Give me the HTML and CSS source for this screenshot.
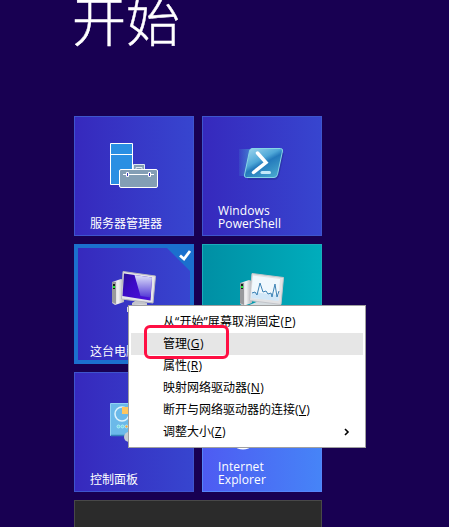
FILE: index.html
```html
<!DOCTYPE html>
<html lang="zh-CN">
<head>
<meta charset="utf-8">
<title>开始</title>
<link rel="stylesheet" href="styles.css">
</head>
<body>
<main class="screen">
  <h1 class="title">开始</h1>
  <section class="tiles">
    <div class="tile">
      <svg class="icon" viewBox="0 0 120 120">
        <path d="M36.500 27.500h22v41h-22z" fill="#2a8fe3" stroke="#fff"/>
        <path d="M36.500 38.500h22" stroke="#fff"/>
        <path d="M59.500 53v-4.500h11v4.500M62 53v-1.500h6v1.500" fill="#839eb5" stroke="#dfe9f5"/>
        <rect x="45.500" y="53.500" width="38" height="18" rx="1.500" fill="#839eb5" stroke="#fff"/>
        <path d="M49 58.500h31" stroke="#fff"/>
        <path d="M52.500 56.500h2v4h-2zM74.500 56.500h2v4h-2z" fill="#3536b8" stroke="#fff"/>
      </svg>
      <span class="label">服务器管理器</span>
    </div>
    <div class="tile">
      <svg class="icon" viewBox="0 0 120 120">
        <defs>
          <linearGradient id="ps" x1="0" y1="0" x2=".7" y2="1"><stop offset="0" stop-color="#a4daf0"/><stop offset=".45" stop-color="#4fa8d8"/><stop offset=".58" stop-color="#2379bb"/><stop offset="1" stop-color="#45a4cd"/></linearGradient>
          <linearGradient id="trail"><stop offset="0" stop-color="#479bd6" stop-opacity=".15"/><stop offset="1" stop-color="#479bd6" stop-opacity=".8"/></linearGradient>
        </defs>
        <path d="M37 33h14l-6 27h-8z" fill="url(#trail)"/>
        <path d="M46 63h26q3 0 4-3l5-23" fill="none" stroke="#25319a" stroke-width="2" opacity=".6"/>
        <path d="M50 32.500h28.500q2.500 0 2 2.500l-5 23.500q-.7 3-3.500 3H44.500q-2.500 0-2-2.500l5-24q.6-2.500 2.500-2.500z" fill="url(#ps)" stroke="#86d5e5"/>
        <path d="M55.500 37l8.500 9.500-12.500 10" fill="none" stroke="#fff" stroke-width="3.500" stroke-linecap="round"/>
        <path d="M60 56.500h7.500" stroke="#c3e9f9" stroke-width="3" stroke-linecap="round"/>
      </svg>
      <span class="label latin">Windows<br>PowerShell</span>
    </div>
    <div class="tile selected">
      <svg class="icon" viewBox="0 0 120 120">
        <defs>
          <linearGradient id="scr" x1="0" y1="0" x2="1" y2=".7"><stop offset="0" stop-color="#281094"/><stop offset=".4" stop-color="#3b0ac5"/><stop offset="1" stop-color="#4a12d8"/></linearGradient>
          <linearGradient id="shine" x1="0" y1="0" x2="0" y2="1"><stop offset="0" stop-color="#dfe2fa"/><stop offset="1" stop-color="#5238d6"/></linearGradient>
          <linearGradient id="metal"><stop offset="0" stop-color="#b8b8bd"/><stop offset=".5" stop-color="#f3f3f5"/><stop offset="1" stop-color="#aeb0b6"/></linearGradient>
        </defs>
        <path d="M38 38l9-3 3 1v22l-9 3-3-2z" fill="url(#metal)"/>
        <path d="M38 38h4v22l-4-2z" fill="#98999d"/>
        <path d="M39 40h2v5h-2z" fill="#171d19"/><path d="M39 42h2v2h-2z" fill="#25e83a"/>
        <path d="M64 55l9 4v4h-15v-4z" fill="#c4c5cb"/>
        <path d="M53 63q12-5 25-1l3 2-3 4H53z" fill="#dddde4"/>
        <path d="M49 27.500l32.500 4.500-2.500 27-31.500-4z" fill="#e6e6ea" stroke="#b7b7be"/>
        <path d="M50 29.500l28 4-1.500 23L48.500 52z" fill="url(#scr)"/>
        <path d="M60.500 31l17.500 2.500-1.500 20-10-1.500z" fill="url(#shine)"/>
      </svg>
      <svg class="badge" viewBox="0 0 31 31"><path d="M0 0h31v31z" fill="#1b70ce"/><path d="M17 11.500l4 3.500 6-8" fill="none" stroke="#fff" stroke-width="2.800"/></svg>
      <span class="label">这台电脑</span>
    </div>
    <div class="tile teal">
      <svg class="icon" viewBox="0 0 120 120">
        <path d="M38 39l9-3 3 1v22l-9 3-3-2z" fill="url(#metal)"/>
        <path d="M38 39h4v22l-4-2z" fill="#98999d"/>
        <path d="M39 40h2v5h-2z" fill="#171d19"/><path d="M39 42h2v2h-2z" fill="#25e83a"/>
        <path d="M57 57h17l6 5H45z" fill="#d5dce0"/>
        <path d="M50 29.500l31.500 4-2.500 27-31.500-4z" fill="#e2e2e4" stroke="#c3c5ca"/>
        <path d="M51 31.500l27 3.500-1.500 21.500L49 54z" fill="#f0f8fd"/>
        <path d="M50 48l27 3-.5 6L49 54z" fill="#d1e7f8"/>
        <path d="M50 49l3-1 2 3 3-12 3 9 3-1 2 3 3-1 1 4 3-13 2 13 2-6" fill="none" stroke="#3c82b5"/>
      </svg>
    </div>
    <div class="tile">
      <svg class="icon" viewBox="0 0 120 120">
        <path d="M36.500 31.500h38v32h-38z" fill="#6bb9e9" stroke="#92d2f4"/>
        <path d="M37 63.500h37" stroke="#3583bb" stroke-width="1.500"/>
        <circle cx="48" cy="42" r="7" fill="none" stroke="#ddf2fc" stroke-width="1.500"/>
        <path d="M48 42v-7h7v7z" fill="#ffc65e"/>
        <g fill="#71d6df" stroke="#c4fbff" stroke-width=".7"><circle cx="44.500" cy="54.500" r="1.500"/><circle cx="48.500" cy="54.500" r="1.500"/><circle cx="52.500" cy="54.500" r="1.500" fill="#f4a334"/></g>
        <circle cx="55" cy="65" r="5" fill="#c6ccd1"/>
      </svg>
      <span class="label">控制面板</span>
    </div>
    <div class="tile ie">
      <svg class="icon" viewBox="0 0 120 120"><circle cx="41" cy="63.500" r="14" fill="#fff"/></svg>
      <span class="label latin">Internet<br>Explorer</span>
    </div>
    <div class="tile wide"></div>
  </section>
  <ul class="menu">
    <li class="unpin">从“开始”屏幕取消固定(<u>P</u>)</li>
    <li class="active">管理(<u>G</u>)</li>
    <li>属性(<u>R</u>)</li>
    <li>映射网络驱动器(<u>N</u>)</li>
    <li>断开与网络驱动器的连接(<u>V</u>)</li>
    <li>调整大小(<u>Z</u>)<svg class="arrow" viewBox="0 0 6 8"><path d="M1 1l3 3-3 3" fill="none" stroke="#000" stroke-width="1.600"/></svg></li>
  </ul>
  <div class="marker"></div>
</main>
</body>
</html>
```
FILE: styles.css
```css
* { box-sizing: border-box; }
body { margin: 0; background: #180052; }
.screen {
  position: relative;
  height: 527px;
  padding-left: 74px;
  overflow: hidden;
  font: 12px/13px "Open Sans", "Noto Sans CJK SC", sans-serif;
}
.title {
  height: 116px;
  margin: 0 0 0 -2px;
  font: 300 54px/37px "Noto Sans CJK SC", sans-serif;
  -webkit-text-stroke: 0.4px #fff;
  color: #fff;
  white-space: nowrap;
}
.tiles {
  display: grid;
  grid-template-columns: 120px 120px;
  grid-auto-rows: 120px;
  gap: 8px;
}
.tile {
  position: relative;
  display: flex;
  align-items: flex-end;
  padding: 0 15px 5px;
  border: 1px solid #3e55cc;
  background: linear-gradient(90deg, #3629bd, #3745cf);
  color: #fff;
}
.icon { position: absolute; top: -1px; left: -1px; width: 120px; height: 120px; }
.label { position: relative; white-space: nowrap; }
.latin { letter-spacing: 0.1px; }
.selected { border: 4px solid #1b70ce; padding: 0 12px 2px; }
.selected .icon { top: -4px; left: -4px; }
.badge { position: absolute; top: -4px; right: -4px; width: 31px; height: 31px; }
.teal { border-color: #1badbb; background: linear-gradient(90deg, #008fa4, #00adbc); }
.ie { border-color: #5585f8; background: linear-gradient(90deg, #4e5bf2, #4684f7); }
.wide { grid-column: span 2; border: 1px solid #484848; background: #2b2b2b; }
.menu {
  position: absolute;
  left: 128px;
  top: 305px;
  width: 238px;
  height: 143px;
  margin: 0;
  padding: 5px 2px;
  border: 1px solid #a0a0a0;
  background: #fff;
  color: #000;
  list-style: none;
}
.menu li {
  display: flex;
  align-items: center;
  height: 22px;
  padding-left: 32px;
  line-height: 22px;
  white-space: nowrap;
}
.menu .active { background: #e6e6e6; }
.menu .unpin { letter-spacing: 0.1px; }
.menu u { padding: 0 0.3px; text-underline-offset: 1px; }
.arrow { width: 6px; height: 8px; margin: 0 13px 0 auto; }
.marker {
  position: absolute;
  left: 144px;
  top: 325px;
  width: 85px;
  height: 34px;
  border: 3px solid #ff0f43;
  border-radius: 6px;
}
```
